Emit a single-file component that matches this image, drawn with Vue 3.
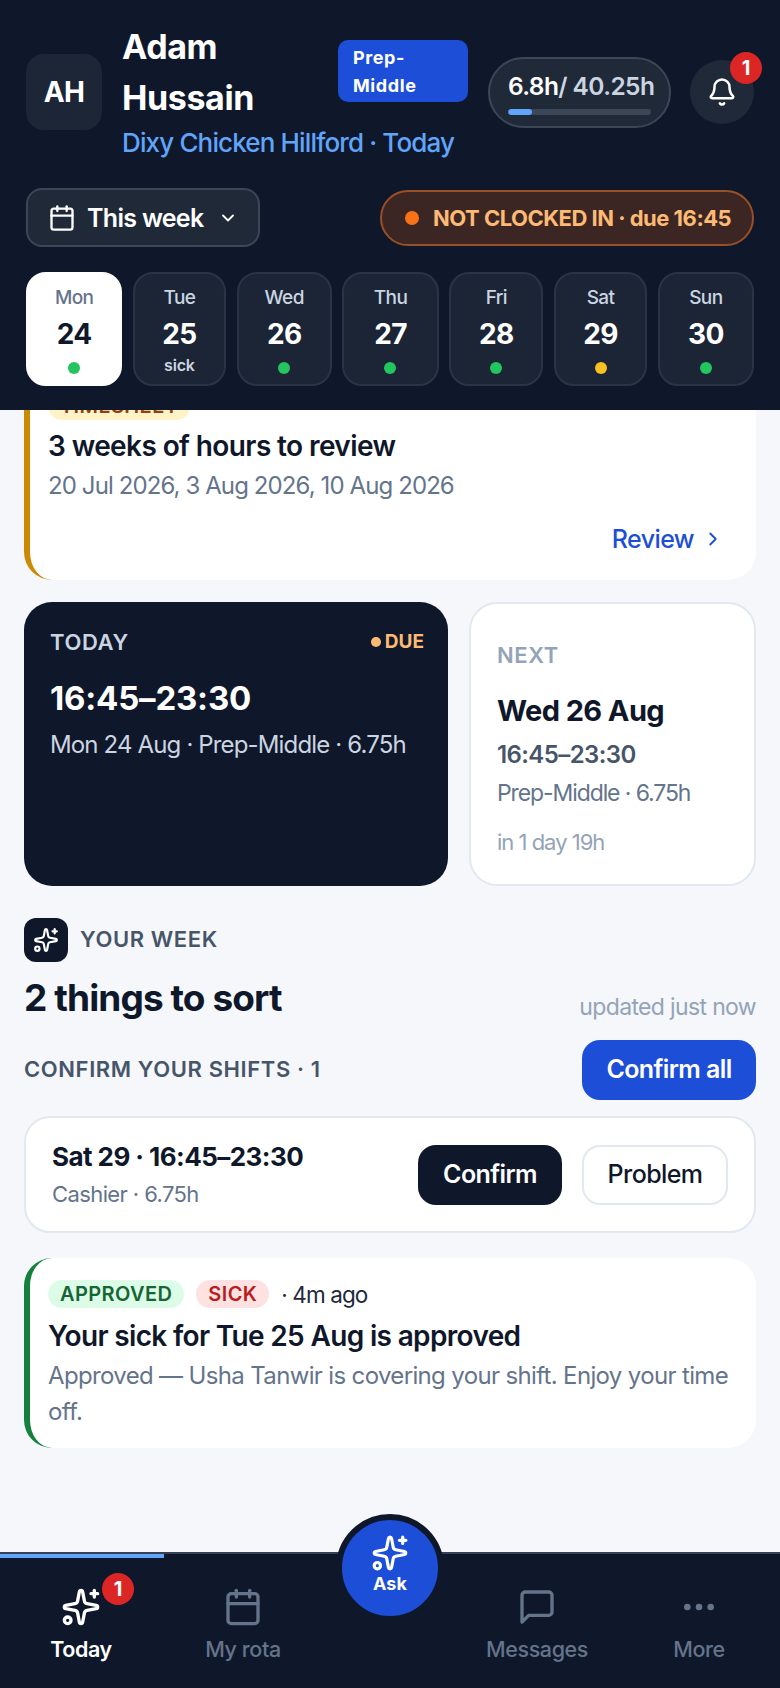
<template>
  <div class="app">
    <header class="top">
      <div class="top-row">
        <div class="avatar">AH</div>
        <div class="who">
          <div class="who-line">
            <h1 class="name">Adam Hussain</h1>
            <span class="role">Prep-Middle</span>
          </div>
          <div class="site">Dixy Chicken Hillford · Today</div>
        </div>
        <div class="hours">
          <div class="hours-text"><b>6.8h</b>/ 40.25h</div>
          <div class="hours-track"><div class="hours-fill" :style="{ width: hoursPct + '%' }"></div></div>
        </div>
        <button class="bell">
          <svg width="30" height="30" viewBox="0 0 24 24" fill="none" stroke="currentColor" stroke-width="2" stroke-linecap="round" stroke-linejoin="round">
            <path d="M10.268 21a2 2 0 0 0 3.464 0" />
            <path d="M3.262 15.326A1 1 0 0 0 4 17h16a1 1 0 0 0 .74-1.673C19.41 13.956 18 12.499 18 8A6 6 0 0 0 6 8c0 4.499-1.411 5.956-2.738 7.326" />
          </svg>
          <span class="badge bell-badge">1</span>
        </button>
      </div>

      <div class="filter-row">
        <button class="week-btn">
          <svg width="28" height="28" viewBox="0 0 24 24" fill="none" stroke="currentColor" stroke-width="2" stroke-linecap="round" stroke-linejoin="round">
            <path d="M8 2v4" /><path d="M16 2v4" />
            <rect x="3" y="4" width="18" height="18" rx="2" />
            <path d="M3 10h18" />
          </svg>
          <span>This week</span>
          <svg class="chev" width="20" height="20" viewBox="0 0 24 24" fill="none" stroke="currentColor" stroke-width="2.2" stroke-linecap="round" stroke-linejoin="round">
            <path d="m6 9 6 6 6-6" />
          </svg>
        </button>
        <div class="clock-pill"><i></i>NOT CLOCKED IN · due 16:45</div>
      </div>

      <div class="days">
        <div v-for="d in days" :key="d.name" class="day" :class="{ active: d.active }">
          <span class="day-name">{{ d.name }}</span>
          <span class="day-num">{{ d.num }}</span>
          <span v-if="d.note" class="day-note">{{ d.note }}</span>
          <i v-else class="day-dot" :class="d.dot"></i>
        </div>
      </div>
    </header>

    <main class="page">
      <section class="card notice timesheet">
        <span class="tag tag-amber">TIMESHEET</span>
        <h3>3 weeks of hours to review</h3>
        <p>20 Jul 2026, 3 Aug 2026, 10 Aug 2026</p>
        <a class="review">
          Review
          <svg width="22" height="22" viewBox="0 0 24 24" fill="none" stroke="currentColor" stroke-width="2" stroke-linecap="round" stroke-linejoin="round">
            <path d="m9 18 6-6-6-6" />
          </svg>
        </a>
      </section>

      <section class="shifts">
        <div class="today">
          <div class="today-head">
            <span>TODAY</span>
            <span class="due"><i></i>DUE</span>
          </div>
          <div class="today-time">16:45–23:30</div>
          <div class="today-meta">Mon 24 Aug · Prep-Middle · 6.75h</div>
        </div>
        <div class="next">
          <div class="next-label">NEXT</div>
          <div class="next-date">Wed 26 Aug</div>
          <div class="next-time">16:45–23:30</div>
          <div class="next-meta">Prep-Middle · 6.75h</div>
          <div class="next-in">in 1 day 19h</div>
        </div>
      </section>

      <section class="week">
        <div class="week-label">
          <span class="week-icon">
            <svg width="26" height="26" viewBox="0 0 24 24" fill="none" stroke="currentColor" stroke-width="2" stroke-linecap="round" stroke-linejoin="round">
              <path :d="sparkle" /><path d="M20 2v4" /><path d="M22 4h-4" /><circle cx="4" cy="20" r="2" />
            </svg>
          </span>
          YOUR WEEK
        </div>
        <div class="week-title">
          <h2>2 things to sort</h2>
          <span>updated just now</span>
        </div>
        <div class="confirm-head">
          <span>CONFIRM YOUR SHIFTS · 1</span>
          <button class="btn btn-blue">Confirm all</button>
        </div>
        <div class="shift-row">
          <div class="shift-info">
            <div class="shift-when">Sat 29 · 16:45–23:30</div>
            <div class="shift-role">Cashier · 6.75h</div>
          </div>
          <button class="btn btn-dark">Confirm</button>
          <button class="btn btn-line">Problem</button>
        </div>
      </section>

      <section class="card notice approved">
        <div class="tags">
          <span class="tag tag-green">APPROVED</span>
          <span class="tag tag-red">SICK</span>
          <span class="ago">· 4m ago</span>
        </div>
        <h3>Your sick for Tue 25 Aug is approved</h3>
        <p>Approved — Usha Tanwir is covering your shift. Enjoy your time off.</p>
      </section>
    </main>

    <nav class="tabs">
      <div class="tab-progress"></div>
      <a v-for="t in tabs" :key="t.label" class="tab" :class="{ on: t.on, gap: t.gap }">
        <template v-if="!t.gap">
          <span class="tab-icon">
            <svg width="40" height="40" viewBox="0 0 24 24" fill="none" stroke="currentColor" stroke-width="2" stroke-linecap="round" stroke-linejoin="round">
              <template v-if="t.icon === 'spark'">
                <path :d="sparkle" /><path d="M20 2v4" /><path d="M22 4h-4" /><circle cx="4" cy="20" r="2" />
              </template>
              <template v-else-if="t.icon === 'cal'">
                <path d="M8 2v4" /><path d="M16 2v4" /><rect x="3" y="4" width="18" height="18" rx="2" /><path d="M3 10h18" />
              </template>
              <path v-else-if="t.icon === 'msg'" d="M21 15a2 2 0 0 1-2 2H7l-4 4V5a2 2 0 0 1 2-2h14a2 2 0 0 1 2 2z" />
              <template v-else>
                <circle cx="12" cy="12" r="1" /><circle cx="19" cy="12" r="1" /><circle cx="5" cy="12" r="1" />
              </template>
            </svg>
            <span v-if="t.badge" class="badge tab-badge">{{ t.badge }}</span>
          </span>
          <span class="tab-label">{{ t.label }}</span>
        </template>
      </a>
      <button class="ask">
        <svg width="38" height="38" viewBox="0 0 24 24" fill="none" stroke="currentColor" stroke-width="2" stroke-linecap="round" stroke-linejoin="round">
          <path :d="sparkle" /><path d="M20 2v4" /><path d="M22 4h-4" /><circle cx="4" cy="20" r="2" />
        </svg>
        <span>Ask</span>
      </button>
    </nav>
  </div>
</template>

<script setup>
const sparkle = 'M11.017 2.814a1 1 0 0 1 1.966 0l1.051 5.558a2 2 0 0 0 1.594 1.594l5.558 1.051a1 1 0 0 1 0 1.966l-5.558 1.051a2 2 0 0 0-1.594 1.594l-1.051 5.558a1 1 0 0 1-1.966 0l-1.051-5.558a2 2 0 0 0-1.594-1.594l-5.558-1.051a1 1 0 0 1 0-1.966l5.558-1.051a2 2 0 0 0 1.594-1.594z';

const hoursPct = (6.8 / 40.25) * 100;

const days = [
  { name: 'Mon', num: 24, dot: 'green', active: true },
  { name: 'Tue', num: 25, note: 'sick' },
  { name: 'Wed', num: 26, dot: 'green' },
  { name: 'Thu', num: 27, dot: 'green' },
  { name: 'Fri', num: 28, dot: 'green' },
  { name: 'Sat', num: 29, dot: 'amber' },
  { name: 'Sun', num: 30, dot: 'green' }
];

const tabs = [
  { label: 'Today', icon: 'spark', on: true, badge: 1 },
  { label: 'My rota', icon: 'cal' },
  { label: 'ask', gap: true },
  { label: 'Messages', icon: 'msg' },
  { label: 'More', icon: 'dots' }
];
</script>

<style>
html, body { margin: 0; background: #f5f7fb; }
</style>

<style scoped>
.app {
  height: 1688px;
  display: flex;
  flex-direction: column;
  overflow: hidden;
  background: #f5f7fb;
  font-family: Inter, "Noto Sans", sans-serif;
  color: #0f172a;
  letter-spacing: -0.6px;
}

h1, h2, h3, p { margin: 0; }
button { font-family: inherit; letter-spacing: inherit; cursor: pointer; }

/* header */
.top {
  position: relative;
  z-index: 2;
  flex: none;
  height: 410px;
  box-sizing: border-box;
  padding: 21px 26px 0;
  background: #0f172a;
}
.top-row { display: flex; align-items: center; }
.avatar {
  flex: none;
  width: 76px;
  height: 76px;
  border-radius: 18px;
  background: #1c2636;
  color: #fff;
  display: flex;
  align-items: center;
  justify-content: center;
  font-size: 28px;
  font-weight: 700;
}
.who { flex: none; width: 346px; margin-left: 20px; }
.who-line { display: flex; align-items: center; justify-content: space-between; }
.name {
  width: min-content;
  font-size: 34px;
  line-height: 51px;
  font-weight: 700;
  color: #fff;
  letter-spacing: -0.4px;
}
.role {
  width: 130px;
  height: 62px;
  box-sizing: border-box;
  margin-bottom: 2px;
  padding: 4px 15px 0;
  border-radius: 10px;
  background: #1d4ed8;
  color: #fff;
  font-size: 18px;
  line-height: 28px;
  font-weight: 700;
  letter-spacing: 0.6px;
}
.site { font-size: 26px; line-height: 40px; font-weight: 500; color: #60a5fa; white-space: nowrap; letter-spacing: -0.86px; }
.hours {
  flex: none;
  width: 183px;
  height: 71px;
  box-sizing: border-box;
  margin-left: 20px;
  padding: 0 18px;
  border: 2px solid #3b4657;
  border-radius: 36px;
  background: #1f2937;
  display: flex;
  flex-direction: column;
  justify-content: center;
  gap: 7px;
  white-space: nowrap;
}
.hours-text { font-size: 24.5px; line-height: 32px; font-weight: 600; color: #cbd5e1; text-align: center; }
.hours-text b { color: #fff; font-weight: 600; }
.hours-track { height: 6px; border-radius: 3px; background: #3b4657; overflow: hidden; }
.hours-fill { height: 100%; border-radius: 3px; background: #60a5fa; }
.bell {
  position: relative;
  flex: none;
  width: 64px;
  height: 64px;
  margin-left: 19px;
  padding: 0;
  border: none;
  border-radius: 50%;
  background: #1f2937;
  color: #fff;
  display: flex;
  align-items: center;
  justify-content: center;
}
.badge {
  position: absolute;
  width: 32px;
  height: 32px;
  border-radius: 50%;
  background: #dc2626;
  color: #fff;
  font-size: 20px;
  line-height: 32px;
  font-weight: 700;
  text-align: center;
  letter-spacing: 0;
}
.bell-badge { top: -8px; right: -8px; }

.filter-row { display: flex; align-items: center; justify-content: space-between; margin-top: 25px; }
.week-btn {
  width: 234px;
  height: 59px;
  box-sizing: border-box;
  padding: 0 0 0 20px;
  border: 2px solid #3b4657;
  border-radius: 16px;
  background: #1f2937;
  color: #fff;
  display: flex;
  align-items: center;
  font-size: 25px;
  font-weight: 600;
  letter-spacing: -0.7px;
}
.week-btn span { margin-left: 11px; }
.chev { margin-left: 14px; }
.clock-pill {
  width: 374px;
  height: 56px;
  box-sizing: border-box;
  padding-left: 23px;
  border: 2px solid #9a4f25;
  border-radius: 28px;
  background: #3b2624;
  color: #fdba74;
  display: flex;
  align-items: center;
  font-size: 22px;
  font-weight: 700;
  white-space: nowrap;
  letter-spacing: -0.5px;
}
.clock-pill i { width: 14px; height: 14px; margin-right: 14px; border-radius: 50%; background: #f97316; }

.days {
  display: grid;
  grid-template-columns: 96fr 93fr 95fr 96fr 94fr 93fr 96fr;
  gap: 10.5px;
  margin-top: 25px;
}
.day {
  height: 114px;
  box-sizing: border-box;
  border: 2px solid #2a3446;
  border-radius: 20px;
  background: #1c2536;
  color: #fff;
  display: flex;
  flex-direction: column;
  align-items: center;
}
.day-name { margin-top: 10px; font-size: 19px; line-height: 28px; font-weight: 500; color: #cbd5e1; }
.day-num { margin-top: 4px; font-size: 28px; line-height: 36px; font-weight: 700; }
.day-dot { margin-top: 10px; width: 12px; height: 12px; border-radius: 50%; }
.day-dot.green { background: #22c55e; }
.day-dot.amber { background: #fbbf24; }
.day-note { margin-top: 2px; font-size: 16px; line-height: 22px; font-weight: 600; color: #cbd5e1; letter-spacing: -0.2px; }
.day.active { background: #fff; border-color: #fff; color: #0f172a; }
.day.active .day-name { color: #64748b; }

/* scrolled content */
.page {
  flex: 1;
  min-height: 0;
  padding: 0 24px;
  display: flex;
  flex-direction: column;
}
.card { background: #fff; border-radius: 28px; box-sizing: border-box; }
.notice { border-left: 6px solid #ca8a04; padding-left: 18px; padding-right: 14px; }
.notice h3 { font-size: 28px; line-height: 38px; font-weight: 600; color: #0f172a; letter-spacing: -0.6px; }
.notice p { font-size: 24px; line-height: 36px; color: #64748b; letter-spacing: -0.9px; }
.tag {
  display: inline-block;
  height: 28px;
  padding: 0 12px;
  border-radius: 14px;
  font-size: 20px;
  line-height: 28px;
  font-weight: 600;
  letter-spacing: 0.4px;
}
.tag-amber { background: #fef3c7; color: #92400e; }
.tag-green { background: #dcfce7; color: #166534; }
.tag-red { background: #fee2e2; color: #b91c1c; }

.timesheet { margin-top: -40px; height: 210px; padding-top: 22px; position: relative; }
.timesheet .tag { display: block; width: 142px; box-sizing: border-box; margin-bottom: 7px; }
.timesheet p { margin-top: 3px; }
.review {
  position: absolute;
  right: 32px;
  bottom: 24px;
  display: flex;
  align-items: center;
  gap: 8px;
  font-size: 25px;
  line-height: 34px;
  font-weight: 500;
  color: #1d4ed8;
}

.shifts { display: flex; gap: 21px; margin-top: 22px; height: 284px; }
.today {
  width: 424px;
  box-sizing: border-box;
  padding: 26px 24px 0 26px;
  border-radius: 28px;
  background: #0f172a;
  color: #fff;
}
.today-head {
  display: flex;
  align-items: center;
  justify-content: space-between;
  font-size: 22px;
  line-height: 28px;
  font-weight: 600;
  letter-spacing: 0.6px;
  color: #cbd5e1;
}
.due { display: flex; align-items: center; gap: 4px; font-size: 19px; font-weight: 700; color: #fdba74; letter-spacing: 0; }
.due i { width: 10px; height: 10px; border-radius: 50%; background: #fdba74; }
.today-time { margin-top: 19px; font-size: 33px; line-height: 46px; font-weight: 700; letter-spacing: -0.2px; }
.today-meta { margin-top: 7px; font-size: 24px; line-height: 34px; font-weight: 400; color: #cbd5e1; white-space: nowrap; letter-spacing: -0.85px; }
.next {
  flex: 1;
  box-sizing: border-box;
  padding: 10px 26px 0;
  border: 2px solid #e2e8f0;
  border-radius: 28px;
  background: #fff;
  display: flex;
  flex-direction: column;
  justify-content: center;
  white-space: nowrap;
}
.next-label { font-size: 22px; line-height: 28px; font-weight: 600; color: #94a3b8; letter-spacing: 0.6px; }
.next-date { margin-top: 23px; font-size: 29px; line-height: 38px; font-weight: 700; }
.next-time { margin-top: 8px; font-size: 24px; line-height: 34px; font-weight: 600; color: #475569; letter-spacing: -0.6px; }
.next-meta { margin-top: 5px; font-size: 23px; line-height: 32px; color: #64748b; letter-spacing: -1.1px; }
.next-in { margin-top: 17px; font-size: 22px; line-height: 32px; color: #94a3b8; letter-spacing: -1px; }

.week { margin-top: 30px; }
.week-label { display: flex; align-items: center; gap: 12px; font-size: 22px; font-weight: 600; color: #475569; letter-spacing: 0.6px; }
.week-icon {
  width: 44px;
  height: 44px;
  border-radius: 12px;
  background: #0f172a;
  color: #fff;
  display: flex;
  align-items: center;
  justify-content: center;
  margin-top: 2px;
}
.week-title { display: flex; align-items: flex-end; justify-content: space-between; margin-top: 11px; }
.week-title h2 { font-size: 37px; line-height: 50px; font-weight: 700; letter-spacing: -0.9px; }
.week-title span { font-size: 23px; line-height: 34px; color: #94a3b8; letter-spacing: -0.65px; margin-bottom: -1px; }
.confirm-head { display: flex; align-items: center; justify-content: space-between; margin-top: 17px; }
.confirm-head span { font-size: 22px; font-weight: 600; color: #475569; letter-spacing: 0.6px; margin-top: -3px; }
.btn {
  height: 60px;
  box-sizing: border-box;
  border: none;
  border-radius: 18px;
  font-size: 25px;
  font-weight: 600;
  padding: 0 0 2px;
}
.btn-blue { width: 174px; background: #1d4ed8; color: #fff; }
.btn-dark { width: 144px; background: #0f172a; color: #fff; }
.btn-line { width: 146px; background: #fff; color: #0f172a; border: 2px solid #e2e8f0; font-weight: 500; margin-left: 20px; }
.shift-row {
  display: flex;
  align-items: center;
  height: 117px;
  box-sizing: border-box;
  margin-top: 16px;
  padding: 0 26px;
  border: 2px solid #e2e8f0;
  border-radius: 26px;
  background: #fff;
}
.shift-info { flex: 1; white-space: nowrap; }
.shift-when { font-size: 26px; line-height: 36px; font-weight: 700; letter-spacing: -0.55px; }
.shift-role { margin-top: 3px; font-size: 22px; line-height: 32px; color: #64748b; letter-spacing: -0.6px; }

.approved {
  border-left-color: #15803d;
  margin-top: 25px;
  height: 190px;
  padding-top: 22px;
}
.tags { display: flex; align-items: center; gap: 12px; height: 28px; }
.ago { font-size: 22.5px; color: #1e293b; margin-left: 0; letter-spacing: -0.9px; }
.approved h3 { margin-top: 9px; letter-spacing: -0.66px; }
.approved p { margin-top: 3px; letter-spacing: -0.65px; }

/* bottom nav */
.tabs {
  position: relative;
  flex: none;
  height: 136px;
  box-sizing: border-box;
  border-top: 2px solid #334155;
  background: #0f172a;
  display: grid;
  grid-template-columns: 1fr 1fr 132px 1fr 1fr;
}
.tab-progress { position: absolute; left: 0; top: 0; width: 164px; height: 4px; background: #60a5fa; }
.tab {
  display: flex;
  flex-direction: column;
  align-items: center;
  color: #64748b;
  padding-top: 33px;
}
.tab.on { color: #fff; }
.tab-icon { position: relative; display: block; width: 40px; height: 40px; }
.tab-label { margin-top: 7px; font-size: 21.5px; line-height: 30px; font-weight: 500; letter-spacing: -0.4px; }
.tab.on .tab-label { font-weight: 600; }
.tab-badge { top: -14px; right: -33px; }
.ask {
  position: absolute;
  left: 336px;
  top: -40px;
  width: 108px;
  height: 108px;
  box-sizing: border-box;
  padding: 0 0 8px;
  border: 6px solid #0f172a;
  border-radius: 50%;
  background: #1d4ed8;
  color: #fff;
  display: flex;
  flex-direction: column;
  align-items: center;
  justify-content: center;
  font-size: 18px;
  line-height: 20px;
  font-weight: 700;
  letter-spacing: 0;
}
.ask span { margin-top: 2px; }
</style>
